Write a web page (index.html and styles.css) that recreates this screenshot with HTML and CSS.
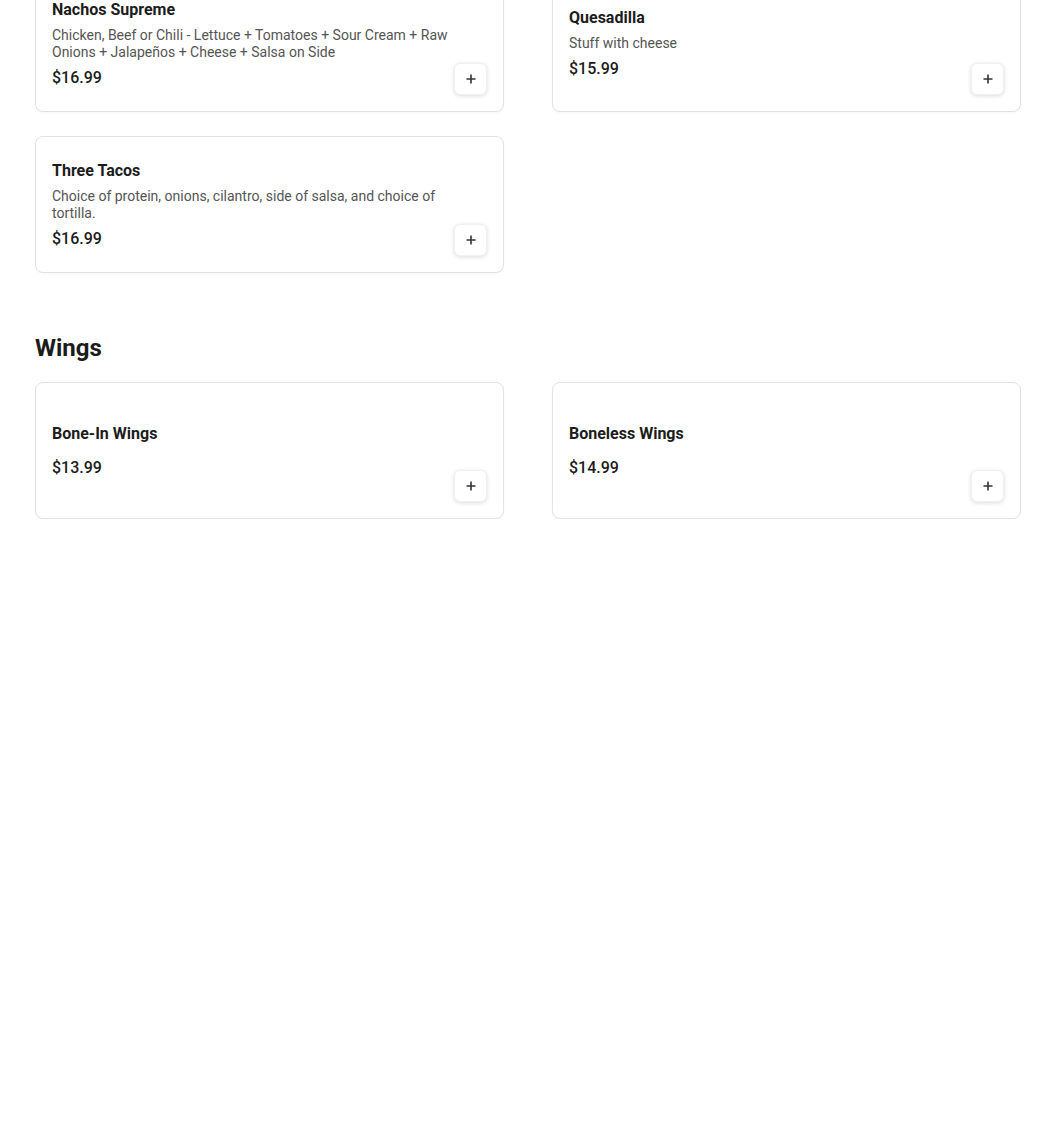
FILE: index.html
```html
<!DOCTYPE html>
<html lang="en">
<head>
<meta charset="utf-8">
<title>Menu</title>
<link rel="stylesheet" href="styles.css">
</head>
<body>
<main class="menu">
  <section class="section section-first">
    <div class="grid">
      <div class="card">
        <div class="info">
          <h3 class="name">Nachos Supreme</h3>
          <p class="desc">Chicken, Beef or Chili - Lettuce + Tomatoes + Sour Cream + Raw Onions + Jalapeños + Cheese + Salsa on Side</p>
          <div class="price">$16.99</div>
        </div>
        <button class="add" aria-label="Add"><svg width="12" height="12" viewBox="0 0 12 12"><path d="M6 1.5v9M1.5 6h9" stroke="#333" stroke-width="1.6" fill="none"/></svg></button>
      </div>
      <div class="card">
        <div class="info">
          <h3 class="name">Quesadilla</h3>
          <p class="desc">Stuff with cheese</p>
          <div class="price">$15.99</div>
        </div>
        <button class="add" aria-label="Add"><svg width="12" height="12" viewBox="0 0 12 12"><path d="M6 1.5v9M1.5 6h9" stroke="#333" stroke-width="1.6" fill="none"/></svg></button>
      </div>
      <div class="card">
        <div class="info">
          <h3 class="name">Three Tacos</h3>
          <p class="desc">Choice of protein, onions, cilantro, side of salsa, and choice of tortilla.</p>
          <div class="price">$16.99</div>
        </div>
        <button class="add" aria-label="Add"><svg width="12" height="12" viewBox="0 0 12 12"><path d="M6 1.5v9M1.5 6h9" stroke="#333" stroke-width="1.6" fill="none"/></svg></button>
      </div>
    </div>
  </section>
  <section class="section">
    <h2 class="section-title">Wings</h2>
    <div class="grid">
      <div class="card">
        <div class="info">
          <h3 class="name">Bone-In Wings</h3>
          <p class="desc"></p>
          <div class="price">$13.99</div>
        </div>
        <button class="add" aria-label="Add"><svg width="12" height="12" viewBox="0 0 12 12"><path d="M6 1.5v9M1.5 6h9" stroke="#333" stroke-width="1.6" fill="none"/></svg></button>
      </div>
      <div class="card">
        <div class="info">
          <h3 class="name">Boneless Wings</h3>
          <p class="desc"></p>
          <div class="price">$14.99</div>
        </div>
        <button class="add" aria-label="Add"><svg width="12" height="12" viewBox="0 0 12 12"><path d="M6 1.5v9M1.5 6h9" stroke="#333" stroke-width="1.6" fill="none"/></svg></button>
      </div>
    </div>
  </section>
</main>
</body>
</html>
```

FILE: styles.css
```css
* { box-sizing: border-box; }
html, body { margin: 0; padding: 0; background: #fff; }
body {
  font-family: Roboto, "Liberation Sans", Arial, sans-serif;
  color: #1c1c1c;
}
.menu {
  width: 986px;
  margin-left: 35px;
}
.section { padding-top: 59px; }
.section-first { padding-top: 0; margin-top: -25px; }
.section-title {
  margin: 0 0 18px;
  font-size: 24px;
  line-height: 32px;
  font-weight: 700;
  color: #1c1c1c;
}
.grid {
  display: grid;
  grid-template-columns: 1fr 1fr;
  column-gap: 48px;
  row-gap: 24px;
  align-items: start;
}
.card {
  display: flex;
  gap: 4px;
  min-height: 137px;
  padding: 16px;
  border: 1px solid #e2e2e2;
  border-radius: 8px;
  background: #fff;
  box-shadow: 0 1px 2px rgba(0,0,0,0.03);
}
.info {
  flex: 1;
  min-width: 0;
  display: flex;
  flex-direction: column;
  justify-content: center;
}
.name {
  margin: 0;
  font-size: 16px;
  line-height: 24px;
  font-weight: 700;
  color: #1c1c1c;
}
.desc {
  margin: 5px 0;
  font-size: 14px;
  line-height: 17px;
  color: #555;
}
.price {
  font-size: 16px;
  line-height: 24px;
  font-weight: 500;
  color: #1c1c1c;
}
.add {
  flex: none;
  align-self: flex-end;
  width: 33px;
  height: 32px;
  padding: 0;
  display: flex;
  align-items: center;
  justify-content: center;
  background: #fff;
  border: 1px solid #f0f0f0;
  border-radius: 6px;
  box-shadow: 0 1px 4px rgba(0,0,0,0.14);
  cursor: pointer;
}
```
